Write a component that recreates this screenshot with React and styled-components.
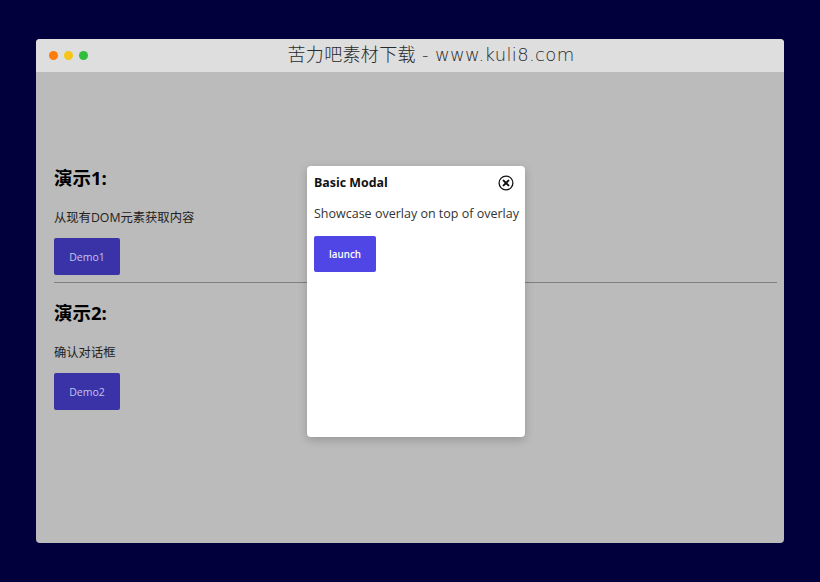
import React from 'react';
import styled, { createGlobalStyle } from 'styled-components';

const GlobalStyle = createGlobalStyle`
  html, body {
    margin: 0;
    padding: 0;
    background: #01003c;
  }
  * {
    box-sizing: border-box;
  }
`;

const Page = styled.div`
  width: 820px;
  height: 582px;
  padding: 39px 36px;
  font-family: "Open Sans", "Noto Sans CJK SC", sans-serif;
`;

const BrowserWindow = styled.div`
  position: relative;
  width: 748px;
  height: 504px;
  border-radius: 4px;
  overflow: hidden;
  background: #bbbbbb;
`;

const TitleBar = styled.div`
  position: relative;
  height: 33px;
  background: #dedede;
  display: flex;
  align-items: center;
  justify-content: center;
`;

const Dots = styled.div`
  position: absolute;
  left: 13px;
  top: 12px;
  display: flex;
  gap: 6px;
`;

const Dot = styled.span`
  width: 9px;
  height: 9px;
  border-radius: 50%;
  background: ${(props) => props.$color};
`;

const SiteTitle = styled.div`
  font-family: "DejaVu Sans", "Noto Sans CJK SC", sans-serif;
  font-weight: 200;
  font-size: 18px;
  letter-spacing: 0.35px;
  line-height: 31px;
  height: 33px;
  margin-left: 42px;
  color: #2a2a2a;
`;

const Content = styled.div`
  padding: 92px 7px 0 18px;
`;

const Section = styled.section`
  height: ${(props) => props.$height}px;
`;

const Heading = styled.h2`
  margin: 0;
  height: 28px;
  font-size: 18.5px;
  line-height: 28px;
  font-weight: 700;
  color: #000;
`;

const Text = styled.p`
  margin: 16px 0 0;
  height: 20px;
  font-size: 12.3px;
  line-height: 20px;
  color: #222;
`;

const DemoButton = styled.button`
  display: block;
  margin-top: 10px;
  width: 66px;
  height: 37px;
  border: none;
  border-radius: 2px;
  background: #3a33a8;
  color: #c4c2e8;
  font-family: inherit;
  font-size: 10.5px;
`;

const Divider = styled.hr`
  margin: 7px 0 0;
  border: none;
  height: 1px;
  background: #7f7f7f;
`;

const Modal = styled.div`
  position: absolute;
  left: 271px;
  top: 127px;
  width: 218px;
  height: 271px;
  padding: 6px 7px 0;
  background: #fff;
  border-radius: 4px;
  box-shadow: 0 3px 10px rgba(0, 0, 0, 0.2);
`;

const ModalHeader = styled.div`
  display: flex;
  align-items: center;
  justify-content: space-between;
  height: 21px;
  padding-right: 4px;
`;

const ModalTitle = styled.div`
  font-size: 12.4px;
  font-weight: 700;
  color: #111;
`;

const CloseIcon = styled.svg`
  display: block;
  width: 16px;
  height: 16px;
`;

const ModalText = styled.p`
  margin: 12px 0 0;
  font-size: 12.5px;
  line-height: 18px;
  color: #333;
  white-space: nowrap;
`;

const LaunchButton = styled.button`
  display: block;
  margin-top: 13px;
  width: 62px;
  height: 36px;
  border: none;
  border-radius: 2px;
  background: #4f46e5;
  color: #fff;
  font-family: inherit;
  font-size: 9.8px;
  font-weight: 600;
`;

export default function App() {
  return (
    <Page>
      <GlobalStyle />
      <BrowserWindow>
        <TitleBar>
          <Dots>
            <Dot $color="#ff7b0a" />
            <Dot $color="#f5c518" />
            <Dot $color="#2fbf3a" />
          </Dots>
          <SiteTitle>苦力吧素材下载 - www.kuli8.com</SiteTitle>
        </TitleBar>
        <Content>
          <Section $height={135}>
            <Heading>演示1:</Heading>
            <Text>从现有DOM元素获取内容</Text>
            <DemoButton>Demo1</DemoButton>
            <Divider />
          </Section>
          <Section $height={120}>
            <Heading>演示2:</Heading>
            <Text>确认对话框</Text>
            <DemoButton>Demo2</DemoButton>
          </Section>
        </Content>
        <Modal>
          <ModalHeader>
            <ModalTitle>Basic Modal</ModalTitle>
            <CloseIcon viewBox="0 0 16 16" fill="none" stroke="#111">
              <circle cx="8" cy="8" r="6.9" strokeWidth="1.3" />
              <path d="M5.6 5.6L10.4 10.4M10.4 5.6L5.6 10.4" strokeWidth="2" strokeLinecap="round" />
            </CloseIcon>
          </ModalHeader>
          <ModalText>Showcase overlay on top of overlay</ModalText>
          <LaunchButton>launch</LaunchButton>
        </Modal>
      </BrowserWindow>
    </Page>
  );
}
